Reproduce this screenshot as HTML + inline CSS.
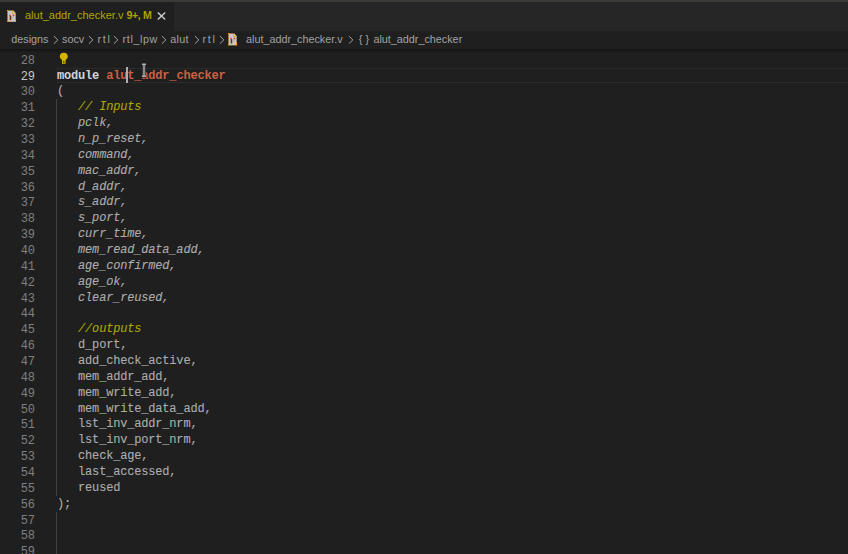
<!DOCTYPE html>
<html><head><meta charset="utf-8">
<style>
html,body{margin:0;padding:0;}
body{width:848px;height:554px;overflow:hidden;background:#1f1f1f;position:relative;font-family:"Liberation Sans",sans-serif;}
.topb{position:absolute;left:0;top:0;width:848px;height:2px;background:#3b3a36;}
.tabbar{position:absolute;left:0;top:2px;width:848px;height:28.5px;background:#262626;}
.tab{position:absolute;left:0;top:2px;width:174px;height:28.5px;background:#1f1f1f;}
.tab .ic{position:absolute;left:6.75px;top:7.9px;}
.tabt{position:absolute;left:25px;top:7.4px;font-size:11px;color:#ada800;white-space:pre;letter-spacing:0px;}
.tabx{position:absolute;left:157px;top:10px;}
.bc{position:absolute;left:0;top:30.5px;width:848px;height:18.5px;background:#1f1f1f;}
.bct{position:absolute;top:33.3px;font-size:10.8px;color:#a2a2a2;white-space:pre;}
.chevw{position:absolute;top:35.4px;} .chev{display:block;}
.shadow{position:absolute;left:0;top:49px;width:848px;height:4px;background:linear-gradient(#131313,#1f1f1f);}
.curl{position:absolute;left:56.5px;top:67.50px;width:800px;height:15.56px;box-sizing:border-box;border:1.5px solid #2b2b2b;border-right:none;}
.ln{position:absolute;left:0;padding-top:2px;width:34.8px;text-align:right;font-family:"Liberation Mono",monospace;font-size:12px;letter-spacing:-0.18px;line-height:15.860px;height:15.860px;color:#7f7f7f;}
.ln.act{color:#c6c6c6;}
.cl{position:absolute;left:57px;padding-top:1px;font-family:"Liberation Mono",monospace;font-size:12px;letter-spacing:-0.18px;line-height:15.860px;height:15.860px;color:#adadad;white-space:pre;-webkit-text-stroke:0.1px;}
.cl i{font-style:italic;color:#adadad;}
.kw{font-weight:bold;color:#d4d4d4;-webkit-text-stroke:0;}
.mn{font-weight:bold;color:#cc6044;-webkit-text-stroke:0;}
.cm{font-style:italic;color:#aca800;}
.guide{position:absolute;left:56px;width:1px;background:#404040;}
.cursor{position:absolute;left:126px;top:67px;width:2px;height:16px;background:#aeafad;}
</style></head><body>
<div class="topb"></div>
<div class="tabbar"></div>
<div class="tab"><div class="ic"><svg style="display:block" width="9.3" height="12.4" viewBox="0 0 9.3 12.4">
<path d="M0.4 0.4 H6 L8.9 3.6 V12 H0.4 Z" fill="#c8c8c8" stroke="#9c6b3c" stroke-width="0.8"/>
<path d="M6 0.4 L8.9 3.6 H6 Z" fill="#dadada"/>
<path d="M5.3 1 H6.4 V2.8 H7.9 V3.8 H5.3 Z" fill="#e9a010"/>
<rect x="0" y="0" width="1.3" height="1.2" fill="#f0a000"/>
<rect x="0.2" y="11.1" width="1.1" height="1.2" fill="#f0a000"/>
<rect x="8" y="9" width="1.3" height="3.3" fill="#f0a000"/>
<rect x="2.2" y="4.6" width="1.6" height="1.5" fill="#d24a2a"/>
<rect x="5.7" y="4.6" width="1.6" height="1.5" fill="#d24a2a"/>
<rect x="2.7" y="6" width="1.5" height="4.1" fill="#6e2a12"/>
<path d="M6.3 6.1 L4.8 9.1" stroke="#c89888" stroke-width="0.9"/>
</svg></div>
<div class="tabt">alut_addr_checker.v <span style="font-size:10.6px;font-weight:bold;color:#aaa400;letter-spacing:-0.4px">9+, M</span></div>
<svg class="tabx" width="9" height="8" viewBox="0 0 9 8"><path d="M0.8 0.5 L8.2 7.5 M8.2 0.5 L0.8 7.5" stroke="#d2d2d2" stroke-width="1.3"/></svg>
</div>
<div class="bc"></div>
<div class="bct" style="left:11.3px">designs</div>
<div class="chevw" style="left:53px"><svg class="chev" width="6" height="10" viewBox="0 0 6 10"><path d="M0.9 1.1 L4.9 4.9 L0.9 8.7" fill="none" stroke="#a0a0a0" stroke-width="1"/></svg></div>
<div class="bct" style="left:62px">socv</div>
<div class="chevw" style="left:88px"><svg class="chev" width="6" height="10" viewBox="0 0 6 10"><path d="M0.9 1.1 L4.9 4.9 L0.9 8.7" fill="none" stroke="#a0a0a0" stroke-width="1"/></svg></div>
<div class="bct" style="left:97.6px;letter-spacing:1.6px">rtl</div>
<div class="chevw" style="left:112.5px"><svg class="chev" width="6" height="10" viewBox="0 0 6 10"><path d="M0.9 1.1 L4.9 4.9 L0.9 8.7" fill="none" stroke="#a0a0a0" stroke-width="1"/></svg></div>
<div class="bct" style="left:122.6px;letter-spacing:0.6px">rtl_lpw</div>
<div class="chevw" style="left:160.5px"><svg class="chev" width="6" height="10" viewBox="0 0 6 10"><path d="M0.9 1.1 L4.9 4.9 L0.9 8.7" fill="none" stroke="#a0a0a0" stroke-width="1"/></svg></div>
<div class="bct" style="left:170.2px;letter-spacing:0.3px">alut</div>
<div class="chevw" style="left:193.7px"><svg class="chev" width="6" height="10" viewBox="0 0 6 10"><path d="M0.9 1.1 L4.9 4.9 L0.9 8.7" fill="none" stroke="#a0a0a0" stroke-width="1"/></svg></div>
<div class="bct" style="left:202.5px;letter-spacing:1.7px">rtl</div>
<div class="chevw" style="left:218.5px"><svg class="chev" width="6" height="10" viewBox="0 0 6 10"><path d="M0.9 1.1 L4.9 4.9 L0.9 8.7" fill="none" stroke="#a0a0a0" stroke-width="1"/></svg></div>
<div style="position:absolute;left:227.8px;top:33.1px;transform:scale(1,1.04);transform-origin:0 0"><svg style="display:block" width="9.3" height="12.4" viewBox="0 0 9.3 12.4">
<path d="M0.4 0.4 H6 L8.9 3.6 V12 H0.4 Z" fill="#c8c8c8" stroke="#9c6b3c" stroke-width="0.8"/>
<path d="M6 0.4 L8.9 3.6 H6 Z" fill="#dadada"/>
<path d="M5.3 1 H6.4 V2.8 H7.9 V3.8 H5.3 Z" fill="#e9a010"/>
<rect x="0" y="0" width="1.3" height="1.2" fill="#f0a000"/>
<rect x="0.2" y="11.1" width="1.1" height="1.2" fill="#f0a000"/>
<rect x="8" y="9" width="1.3" height="3.3" fill="#f0a000"/>
<rect x="2.2" y="4.6" width="1.6" height="1.5" fill="#d24a2a"/>
<rect x="5.7" y="4.6" width="1.6" height="1.5" fill="#d24a2a"/>
<rect x="2.7" y="6" width="1.5" height="4.1" fill="#6e2a12"/>
<path d="M6.3 6.1 L4.8 9.1" stroke="#c89888" stroke-width="0.9"/>
</svg></div>
<div class="bct" style="left:246px">alut_addr_checker.v</div>
<div class="chevw" style="left:348px"><svg class="chev" width="6" height="10" viewBox="0 0 6 10"><path d="M0.9 1.1 L4.9 4.9 L0.9 8.7" fill="none" stroke="#a0a0a0" stroke-width="1"/></svg></div>
<div class="bct" style="left:358.8px">{ }</div>
<div class="bct" style="left:373.4px">alut_addr_checker</div>
<div class="shadow"></div>
<div class="curl"></div>
<div class="guide" style="top:99.22px;height:396.50px"></div>
<div class="guide" style="top:511.58px;height:42.42px"></div>
<div class="ln" style="top:51.64px">28</div><div class="ln act" style="top:67.50px">29</div><div class="cl" style="top:67.50px"><span class="kw">module</span> <span class="mn">alut_addr_checker</span></div><div class="ln" style="top:83.36px">30</div><div class="cl" style="top:83.36px">(</div><div class="ln" style="top:99.22px">31</div><div class="cl" style="top:99.22px">   <span class="cm">// Inputs</span></div><div class="ln" style="top:115.08px">32</div><div class="cl" style="top:115.08px">   <i>pclk,</i></div><div class="ln" style="top:130.94px">33</div><div class="cl" style="top:130.94px">   <i>n_p_reset,</i></div><div class="ln" style="top:146.80px">34</div><div class="cl" style="top:146.80px">   <i>command,</i></div><div class="ln" style="top:162.66px">35</div><div class="cl" style="top:162.66px">   <i>mac_addr,</i></div><div class="ln" style="top:178.52px">36</div><div class="cl" style="top:178.52px">   <i>d_addr,</i></div><div class="ln" style="top:194.38px">37</div><div class="cl" style="top:194.38px">   <i>s_addr,</i></div><div class="ln" style="top:210.24px">38</div><div class="cl" style="top:210.24px">   <i>s_port,</i></div><div class="ln" style="top:226.10px">39</div><div class="cl" style="top:226.10px">   <i>curr_time,</i></div><div class="ln" style="top:241.96px">40</div><div class="cl" style="top:241.96px">   <i>mem_read_data_add,</i></div><div class="ln" style="top:257.82px">41</div><div class="cl" style="top:257.82px">   <i>age_confirmed,</i></div><div class="ln" style="top:273.68px">42</div><div class="cl" style="top:273.68px">   <i>age_ok,</i></div><div class="ln" style="top:289.54px">43</div><div class="cl" style="top:289.54px">   <i>clear_reused,</i></div><div class="ln" style="top:305.40px">44</div><div class="ln" style="top:321.26px">45</div><div class="cl" style="top:321.26px">   <span class="cm">//outputs</span></div><div class="ln" style="top:337.12px">46</div><div class="cl" style="top:337.12px">   d_port,</div><div class="ln" style="top:352.98px">47</div><div class="cl" style="top:352.98px">   add_check_active,</div><div class="ln" style="top:368.84px">48</div><div class="cl" style="top:368.84px">   mem_addr_add,</div><div class="ln" style="top:384.70px">49</div><div class="cl" style="top:384.70px">   mem_write_add,</div><div class="ln" style="top:400.56px">50</div><div class="cl" style="top:400.56px">   mem_write_data_add,</div><div class="ln" style="top:416.42px">51</div><div class="cl" style="top:416.42px">   lst_inv_addr_nrm,</div><div class="ln" style="top:432.28px">52</div><div class="cl" style="top:432.28px">   lst_inv_port_nrm,</div><div class="ln" style="top:448.14px">53</div><div class="cl" style="top:448.14px">   check_age,</div><div class="ln" style="top:464.00px">54</div><div class="cl" style="top:464.00px">   last_accessed,</div><div class="ln" style="top:479.86px">55</div><div class="cl" style="top:479.86px">   reused</div><div class="ln" style="top:495.72px">56</div><div class="cl" style="top:495.72px">);</div><div class="ln" style="top:511.58px">57</div><div class="ln" style="top:527.44px">58</div><div class="ln" style="top:543.30px">59</div>
<div class="cursor"></div>
<svg style="position:absolute;left:59px;top:51.5px" width="10" height="13" viewBox="0 0 10 13"><path d="M0.8 4.7 A4 4 0 1 1 8.8 4.7 C8.8 6.2 7.5 7 6.6 8 V11.8 H3 V8 C2.1 7 0.8 6.2 0.8 4.7 Z" fill="#d4b400"/><rect x="4.1" y="9.2" width="1.3" height="1.3" fill="#1f1f1f"/></svg>
<svg style="position:absolute;left:141px;top:62.5px" width="6" height="15" viewBox="0 0 6 15"><path d="M0.6 0.3 H5.4 V2.3 H4.7 V12.2 H5.4 V14.4 H0.6 V12.2 H1.3 V2.3 H0.6 Z" fill="#101010"/><rect x="0.9" y="0.6" width="4.2" height="1.2" fill="#e2e2e2"/><rect x="1.7" y="1.8" width="2.6" height="10.7" fill="#8c8c8c"/><rect x="0.9" y="12.5" width="4.2" height="1.2" fill="#e2e2e2"/></svg>
</body></html>
